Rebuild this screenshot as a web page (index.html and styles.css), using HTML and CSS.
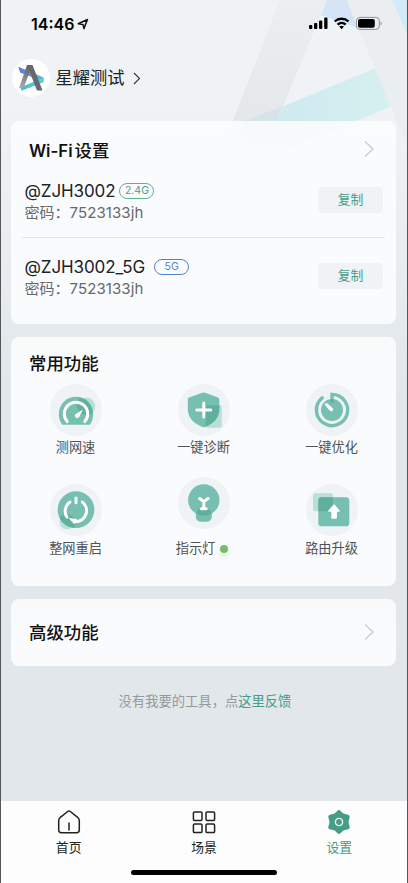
FILE: index.html
```html
<!DOCTYPE html>
<html lang="zh-CN">
<head>
<meta charset="utf-8">
<meta name="viewport" content="width=device-width, initial-scale=1">
<title>设置</title>
<link rel="stylesheet" href="styles.css">
</head>
<body>
<div class="screen">
  <svg class="backdrop" width="408" height="170" viewBox="0 0 408 170" aria-hidden="true">
    <defs>
      <linearGradient id="leg" x1="0" y1="0" x2="0" y2="1"><stop offset="0" stop-color="#ebeff1"/><stop offset="1" stop-color="#e3e6e9"/></linearGradient>
      <linearGradient id="band" x1="0" y1="0" x2="1" y2="0"><stop offset="0" stop-color="#cee8f2"/><stop offset="1" stop-color="#d5f0ee"/></linearGradient>
    </defs>
    <path d="M321 15L327 0H347L358 28Z" fill="#d5e5f6"/>
    <path d="M392 0H408V36Z" fill="#d3eaf8"/>
    <path d="M277 121L284 106L376 68L390 107L262 160L245 143Z" fill="url(#band)"/>
    <path d="M376 68L408 56V102L390 107Z" fill="#e4edee"/>
    <path d="M280 0H327L277 121L250 148L230 128Z" fill="url(#leg)"/>
    <path d="M244 121L283 106L277 121L262 160L240 138Z" fill="#d6e4ea"/>
    <path d="M347 0H392L408 37V147L358 28Z" fill="#eaeef0"/>
  </svg>

  <header class="status">
    <span class="clock">14:46</span>
    <svg class="locate" width="12" height="12" viewBox="0 0 12 12"><path d="M1.2 5.8L10.5 1.5L6.9 10.6L6 6.4Z" fill="none" stroke="#111" stroke-width="1.5" stroke-linejoin="round"/></svg>
    <svg class="indicators" width="74" height="16" viewBox="0 0 74 16">
      <rect x="0" y="9" width="3.3" height="4" rx="1"/><rect x="5" y="7" width="3.3" height="6" rx="1"/><rect x="10" y="4.4" width="3.3" height="8.6" rx="1"/><rect x="15.2" y="1.5" width="3.3" height="11.5" rx="1"/>
      <g fill="none" stroke="#000" stroke-width="2.3"><path d="M25.7 5.5A10 10 0 0 1 39.5 5.5"/><path d="M28.5 8.6A6 6 0 0 1 36.7 8.6"/></g>
      <path d="M30.2 10.6Q32.6 8.8 35 10.6L32.6 13.2Z"/>
      <rect x="47.4" y="1.4" width="23" height="12" rx="3.6" fill="none" stroke="#8c9092"/>
      <rect x="49" y="3" width="16.8" height="8.8" rx="2"/><path d="M71.6 5.6Q74 7.4 71.6 9.2Z" fill="#8c9092"/>
    </svg>
  </header>

  <div class="profile">
    <svg class="avatar" width="38" height="38" viewBox="0 0 38 38">
      <defs>
        <linearGradient id="gray" x1="0" y1="1" x2=".7" y2="0"><stop offset="0" stop-color="#b4b5b9"/><stop offset="1" stop-color="#5d6065"/></linearGradient>
        <linearGradient id="cyan" x1="0" y1="0" x2="1" y2="0"><stop offset="0" stop-color="#4bb8dc"/><stop offset="1" stop-color="#5bd2c9"/></linearGradient>
        <linearGradient id="blue" x1="0" y1="0" x2="1" y2="0"><stop offset="0" stop-color="#6575df"/><stop offset="1" stop-color="#55b7df"/></linearGradient>
      </defs>
      <circle cx="19" cy="19" r="19" fill="#fff"/>
      <path d="M6.3 7.8L31.5 18.5V22.5L8 13.5Z" fill="url(#blue)"/>
      <path d="M8.5 28.5L31.5 18.5V23.3L9.5 31.8Z" fill="url(#cyan)"/>
      <path d="M15 6H20L12 28L6.8 29.5Z" fill="url(#gray)"/>
      <path d="M15 6H20.5L30.5 31.5H25Z" fill="#66696e"/>
    </svg>
    <span class="name">星耀测试</span>
    <svg class="name-arrow" width="8" height="13" viewBox="0 0 8 13"><path d="M1 1L6.5 6.5L1 12" fill="none" stroke="#333" stroke-width="1.1"/></svg>
  </div>

  <main class="content">
    <section class="card wifi">
      <div class="card-head">
        <h2>Wi-Fi<span class="cjk-gap">设置</span></h2>
        <svg class="chevron" width="10" height="18" viewBox="0 0 10 18"><path d="M1 1.5L9 9L1 16.5" fill="none" stroke="#c9cccf" stroke-width="1.3"/></svg>
      </div>
      <div class="network">
        <div class="details">
          <div class="ssid">@ZJH3002<span class="band">2.4G</span></div>
          <div class="password">密码：<span class="secret">7523133jh</span></div>
        </div>
        <button class="copy">复制</button>
      </div>
      <div class="network network-next">
        <div class="details">
          <div class="ssid">@ZJH3002_5G<span class="band band-5g">5G</span></div>
          <div class="password">密码：<span class="secret">7523133jh</span></div>
        </div>
        <button class="copy">复制</button>
      </div>
    </section>

    <section class="card common">
      <h2>常用功能</h2>
      <div class="tools">
        <div class="tool">
          <svg width="52" height="52" viewBox="0 0 52 52"><circle class="disc" cx="26" cy="26" r="26"/>
            <circle class="tint" cx="36.5" cy="22.3" r="8.7"/>
            <path class="main" d="M12.3 40.7C10.2 38 8.8 34.5 8.8 30A17.2 17.2 0 0 1 43.2 30C43.2 34.5 41.8 38 39.7 40.7Z"/>
            <path class="overlap" d="M30 13.4A17.2 17.2 0 0 1 43 28.4A8.7 8.7 0 0 1 30 13.4Z"/>
            <path class="line" d="M17.2 37.6A11.7 11.7 0 1 1 34.8 37.6"/><path d="M33 25.6L29.2 33A2.1 2.1 0 0 1 25.3 30.2Z" fill="#fff"/></svg>
          <span>测网速</span>
        </div>
        <div class="tool">
          <svg width="52" height="52" viewBox="0 0 52 52"><circle class="disc" cx="26" cy="26" r="26"/>
            <rect class="tint" x="27.7" y="21.3" width="16" height="22.4" rx="2"/>
            <path class="main" d="M24.3 8.8Q25.7 8.2 27.1 8.8L40 13.6Q41.3 14.2 41.3 15.6V25C41.3 34 35.5 39.5 27 43Q25.7 43.5 24.4 43C16 39.5 9.8 34 9.8 25V15.6Q9.8 14.2 11.1 13.6Z"/>
            <path class="overlap" d="M27.7 23.3Q27.7 21.3 29.7 21.3H41.3V25C41.3 34 35.5 39.5 27.7 42.7Z"/>
            <path class="line" d="M25.8 19V33M18.8 26H32.8"/></svg>
          <span>一键诊断</span>
        </div>
        <div class="tool">
          <svg width="52" height="52" viewBox="0 0 52 52"><circle class="disc" cx="26" cy="26" r="26"/>
            <circle class="main" cx="26" cy="26" r="11"/>
            <path class="ring" d="M26 16V10.4A15.6 15.6 0 1 1 16.2 13.9"/>
            <path class="overlap" d="M24.2 15.2H27.8V17Q27.8 18.7 26 18.7T24.2 17Z"/>
            <path d="M19.3 21.5A1.5 1.5 0 0 1 21.4 19.4L26.8 24.2A1.9 1.9 0 0 1 24.2 26.9Z" fill="#fff"/></svg>
          <span>一键优化</span>
        </div>
        <div class="tool">
          <svg width="52" height="52" viewBox="0 0 52 52"><circle class="disc" cx="26" cy="26" r="26"/>
            <circle class="tint" cx="17" cy="37.8" r="7.5"/>
            <circle class="main" cx="26" cy="25.7" r="18.4"/>
            <path class="overlap" d="M9.6 34.2A18.4 18.4 0 0 0 24.1 44A7.5 7.5 0 1 0 9.6 34.2Z"/>
            <path class="line" d="M26 14V18.7M20 18A11 11 0 0 0 17 33.2M32.3 18A11 11 0 0 1 26 37.7"/><path d="M18.6 34L27.2 35L24.3 40.2Z" fill="#fff"/></svg>
          <span>整网重启</span>
        </div>
        <div class="tool tool-raised">
          <svg width="52" height="52" viewBox="0 0 52 52"><circle class="disc" cx="26" cy="26" r="26"/>
            <path class="main" d="M17.8 36Q18.5 32.2 22 32.2H30Q33.3 32.2 33.8 36V39Q33.8 44.8 28 44.8H23.6Q17.8 44.8 17.8 39Z"/>
            <circle class="main" cx="25.8" cy="23" r="15.7"/>
            <path class="overlap" d="M18.4 36.8Q18.5 32.2 22 32.2H30Q33.3 32.2 33.4 36.8A15.7 15.7 0 0 1 18.4 36.8Z"/>
            <path class="line" d="M21.5 21.6L25.8 24.6L30.1 21.6M25.8 24.6V31.5M23.4 31.8H28.2"/></svg>
          <span class="lamp">指示灯<i class="dot"></i></span>
        </div>
        <div class="tool">
          <svg width="52" height="52" viewBox="0 0 52 52"><circle class="disc" cx="26" cy="26" r="26"/>
            <rect class="tint" x="7" y="9.3" width="20" height="18" rx="2"/>
            <rect class="main" x="12.3" y="13.3" width="31" height="29" rx="3.4"/>
            <path class="overlap" d="M15.7 13.3H27V25.3Q27 27.3 25 27.3H12.3V16.7Q12.3 13.3 15.7 13.3Z"/>
            <path d="M27.1 20.9Q28 19.8 28.9 20.9L33.6 26.4Q34.2 27.7 33 27.8H30.9V33.5Q30.9 34.7 29.7 34.7H26.5Q25.3 34.7 25.3 33.5V27.8H23Q21.8 27.7 22.4 26.4Z" fill="#fff"/></svg>
          <span>路由升级</span>
        </div>
      </div>
    </section>

    <section class="card advanced">
      <h2>高级功能</h2>
      <svg class="chevron" width="10" height="18" viewBox="0 0 10 18"><path d="M1 1.5L9 9L1 16.5" fill="none" stroke="#c9cccf" stroke-width="1.3"/></svg>
    </section>

    <p class="feedback">没有我要的工具，点<a>这里反馈</a></p>
  </main>

  <footer class="bottom">
    <nav class="tabs">
      <div class="tab">
        <svg width="24" height="24" viewBox="0 0 24 24" fill="none" stroke="#222" stroke-width="1.5" stroke-linecap="round" stroke-linejoin="round"><path d="M10.7 1.5Q12 .5 13.3 1.5L21 7.7Q22.3 8.8 22.3 10.5V20Q22.3 22.7 19.6 22.7H4.4Q1.7 22.7 1.7 20V10.5Q1.7 8.8 3 7.7ZM12 13V20"/></svg>
        <span>首页</span>
      </div>
      <div class="tab">
        <svg width="24" height="24" viewBox="0 0 24 24" fill="none" stroke="#222" stroke-width="1.5"><rect x="1.4" y="1.9" width="8.6" height="8.6" rx="1.2"/><rect x="14" y="1.9" width="8.6" height="8.6" rx="1.2"/><rect x="1.4" y="14" width="8.6" height="8.6" rx="1.2"/><rect x="14" y="14" width="8.6" height="8.6" rx="1.2"/></svg>
        <span>场景</span>
      </div>
      <div class="tab active">
        <svg width="24" height="24" viewBox="0 0 24 24"><path d="M12 2.4L15 5.4L20.5 6.8L19.2 12L20.5 17.2L15 18.6L12 21.6L9 18.6L3.5 17.2L4.8 12L3.5 6.8L9 5.4Z" fill="#479c88" stroke="#479c88" stroke-width="4.4" stroke-linejoin="round"/><circle cx="12" cy="12" r="3.6" fill="none" stroke="#fff" stroke-width="1.4"/></svg>
        <span>设置</span>
      </div>
    </nav>
    <div class="home-bar"></div>
  </footer>
</div>
</body>
</html>
```
FILE: styles.css
```css
* { box-sizing: border-box; }

body {
  margin: 0;
  font-family: Inter, "Noto Sans CJK SC", sans-serif;
  color: #202224;
}

.screen {
  position: relative;
  display: flex;
  flex-direction: column;
  width: 408px;
  height: 883px;
  overflow: hidden;
  border: solid #55585b;
  border-width: 0 1px;
  background: linear-gradient(#eff3f6 0, #eff3f6 105px, #e2e7eb 390px);
}

.backdrop { position: absolute; top: 0; left: -1px; }

.status, .profile, .content, .bottom { position: relative; }

.status {
  display: flex;
  align-items: center;
  height: 47px;
  padding: 0 24px 0 30px;
}

.clock { font-size: 16px; font-weight: 600; line-height: 20px; color: #000; }
.locate { margin-left: 3px; }
.indicators { margin-left: auto; }

.profile {
  display: flex;
  align-items: center;
  height: 62px;
  padding-left: 10.5px;
}

.name { font-size: 17.3px; line-height: 24px; margin-left: 6px; }
.name-arrow { margin-left: 8px; }

.content {
  display: flex;
  flex-direction: column;
  gap: 13px;
  padding: 12px 11px 0 10px;
}

.card {
  border-radius: 8px;
  background: linear-gradient(rgba(253, 253, 253, .84), #fafbfd 50px);
}

h2 {
  margin: 0;
  font-size: 17.4px;
  font-weight: 500;
  line-height: 24px;
  color: #111;
}

.wifi { height: 203px; padding: 18px 11px 0; }

.wifi h2 { font-weight: 600; font-size: 16.8px; }
.cjk-gap { margin-left: 2px; font-size: 17.4px; font-weight: 500; }

.card-head {
  display: flex;
  align-items: center;
  justify-content: space-between;
  height: 23px;
  padding: 0 11px 0 7px;
}

.chevron { margin-top: -3px; }

.network {
  display: flex;
  align-items: center;
  justify-content: space-between;
  height: 75px;
  padding: 0 2px 0 2.5px;
}

.network-next { height: 76px; border-top: 1px solid #e3e6e9; }

.details { padding-top: 4px; }

.ssid {
  display: flex;
  align-items: center;
  font-size: 17px;
  line-height: 22px;
  letter-spacing: -.1px;
}

.password { font-size: 15px; line-height: 22px; color: #66696b; }
.secret { letter-spacing: .1px; }

.band {
  width: 35px;
  height: 16px;
  margin-left: 4px;
  border: 1px solid #62af9b;
  border-radius: 8px;
  font-size: 10.5px;
  line-height: 14px;
  text-align: center;
  letter-spacing: 0;
  color: #4d9f8a;
}

.band-5g { margin-left: 9px; border-color: #4e83d6; color: #4c7fd2; }

.copy {
  width: 65px;
  height: 26px;
  padding: 0;
  border: 0;
  border-radius: 4px;
  background: #eff3f6;
  font: 12.8px/26px Inter, "Noto Sans CJK SC", sans-serif;
  color: #479c88;
}

.common { height: 249px; padding-top: 15px; }
.common h2 { padding-left: 18px; }

.tools {
  display: grid;
  grid-template-columns: repeat(3, 128px);
  grid-auto-rows: 100.5px;
  justify-content: center;
  padding-top: 7px;
}

.tool {
  display: flex;
  flex-direction: column;
  align-items: center;
  gap: 1.5px;
  padding-top: .5px;
  font-size: 13.2px;
  line-height: 20px;
  color: #505355;
}

.tool-raised { padding-top: 0; margin-top: -7px; gap: 9px; }

.disc { fill: #eff3f6; }
.tint { fill: #b9dfd7; }
.main { fill: #77bfb0; }
.overlap { fill: #56ab98; opacity: .72; }
.line { fill: none; stroke: #fff; stroke-width: 3; stroke-linecap: round; stroke-linejoin: round; }
.ring { fill: none; stroke: #77bfb0; stroke-width: 3.4; stroke-linecap: round; }

.lamp { display: flex; align-items: center; gap: 5px; margin-right: 3px; }

.dot {
  width: 8px;
  height: 8px;
  margin-top: 2px;
  border-radius: 50%;
  background: #78bb68;
  box-shadow: 0 4px 5px #dcf2d8;
}

.advanced {
  display: flex;
  align-items: center;
  justify-content: space-between;
  height: 67px;
  padding: 1px 22px 0 18px;
}

.feedback {
  margin: 12px 0 0 3px;
  font-size: 13.3px;
  line-height: 20px;
  text-align: center;
  color: #94999c;
}

.feedback a { color: #479c88; }

.bottom { height: 82.5px; margin-top: auto; background: #fdfdfd; }

.tabs { display: grid; grid-template-columns: repeat(3, 1fr); padding-top: 9px; }

.tab {
  display: flex;
  flex-direction: column;
  align-items: center;
  gap: 4.5px;
  font-size: 12.8px;
  line-height: 20px;
}

.active { color: #479c88; }

.home-bar {
  width: 146px;
  height: 5px;
  margin: 12px auto 0;
  border-radius: 3px;
  background: #000;
}
```
